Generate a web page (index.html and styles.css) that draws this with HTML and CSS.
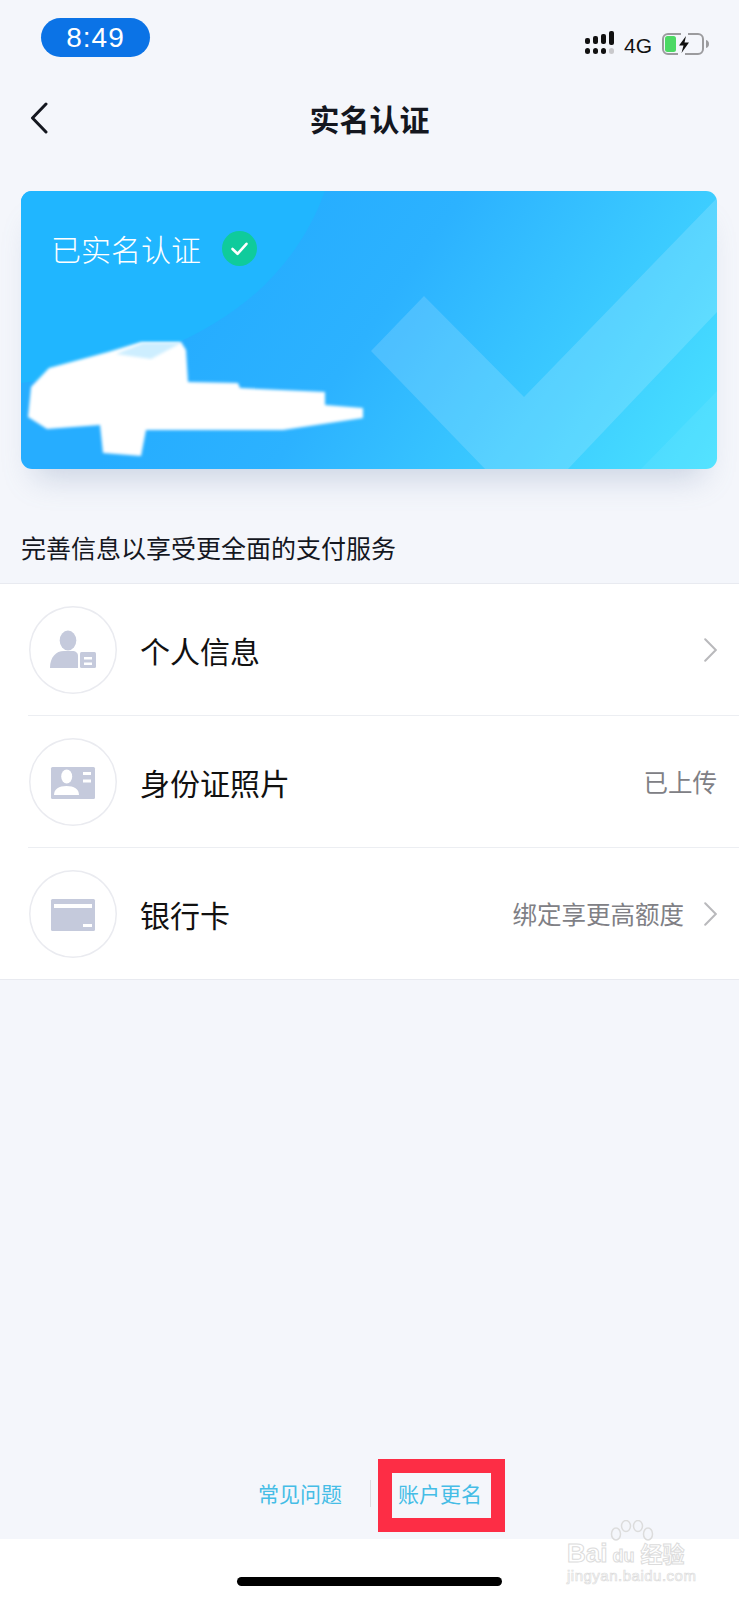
FILE: index.html
```html
<!DOCTYPE html>
<html lang="zh-CN">
<head>
    <meta charset="UTF-8">
    <title>实名认证</title>
    <link rel="stylesheet" href="styles.css">
</head>
<body>
    <div class="screen">
        <!-- status bar -->
        <div class="status-bar">
            <div class="time-pill">8:49</div>
            <div class="status-right">
                <svg class="signal" width="29" height="23" viewBox="0 0 29 23">
                    <rect x="0" y="7" width="5" height="6" rx="2" fill="#111"/>
                    <rect x="8" y="5" width="5" height="8" rx="2" fill="#111"/>
                    <rect x="16" y="3" width="5" height="10" rx="2" fill="#111"/>
                    <rect x="24" y="0" width="5" height="14" rx="2" fill="#111"/>
                    <rect x="0" y="17" width="5" height="6" rx="2.5" fill="#111"/>
                    <rect x="8" y="17" width="5" height="6" rx="2.5" fill="#111"/>
                    <rect x="16" y="17" width="5" height="6" rx="2.5" fill="#111"/>
                    <rect x="24" y="17" width="5" height="6" rx="2.5" fill="#c9c9cc"/>
                </svg>
                <span class="network">4G</span>
                <svg class="battery" width="47" height="22" viewBox="0 0 47 22">
                    <path d="M19 1H6a5 5 0 0 0-5 5v10a5 5 0 0 0 5 5h10M26 1h10a5 5 0 0 1 5 5v10a5 5 0 0 1-5 5H23" fill="none" stroke="#9b9b9e" stroke-width="2"/>
                    <rect x="3" y="3" width="11" height="16" rx="2.5" fill="#4cd964"/>
                    <path d="M24 3l-7 9.500h4.500l-2 7.500 7.500-10.500h-4.500z" fill="#111"/>
                    <path d="M44 7c2 .6 3 2 3 4s-1 3.400-3 4z" fill="#9b9b9e"/>
                </svg>
            </div>
        </div>

        <!-- nav -->
        <div class="nav">
            <svg class="back" width="18" height="32" viewBox="0 0 18 32">
                <path d="M16 2L2.500 16 16 30" fill="none" stroke="#14171f" stroke-width="3" stroke-linecap="round" stroke-linejoin="round"/>
            </svg>
            <h1 class="nav-title">实名认证</h1>
        </div>

        <!-- verified card -->
        <div class="card">
            <svg class="card-bg" width="696" height="278" viewBox="0 0 696 278">
                <path d="M0 0H304C272 88 190 170 0 192Z" fill="#20b6ff"/>
                <path d="M403 105L350 160 464 278H547L696 121V7L503 206Z" fill="#fff" fill-opacity=".15" transform="translate(0 0)"/>
                <path d="M620 278L696 200V278Z" fill="#fff" fill-opacity=".06"/>
            </svg>
            <div class="card-head">
                <span class="card-title">已实名认证</span>
                <svg class="card-check" width="35" height="35" viewBox="0 0 35 35">
                    <circle cx="17.500" cy="17.500" r="17.500" fill="#0fcb9c"/>
                    <path d="M10.500 18l5 4.800 9-10" fill="none" stroke="#fff" stroke-width="2.600" stroke-linecap="round" stroke-linejoin="round"/>
                </svg>
            </div>
            <!-- painted-out name in the source shot -->
            <svg class="card-blot" width="696" height="278" viewBox="0 0 696 278">
                <defs>
                    <filter id="soft"><feGaussianBlur stdDeviation="1.800"/></filter>
                </defs>
                <path d="M160 151L120 151 87 161 28 177 10 196 7 226 26 238 79 234 82 262 120 265 125 239 262 239 342 227 342 217 304 214 304 201 219 197 217 192 167 191 165 159Z" fill="#fff" filter="url(#soft)"/>
                <path d="M160 152L122 152 95 163 130 168Z" fill="#cdeeff" filter="url(#soft)"/>
            </svg>
        </div>

        <p class="hint">完善信息以享受更全面的支付服务</p>

        <div class="list">
            <div class="row">
                <div class="row-icon">
                    <svg width="88" height="88" viewBox="0 0 88 88">
                        <ellipse cx="39" cy="34.500" rx="8.300" ry="10" fill="#c5cadc"/>
                        <path d="M21 62c0-11 6-17 14-17h8c4 0 6 2 6 5v12z" fill="#c5cadc"/>
                        <rect x="51" y="46" width="16" height="16" rx="1.500" fill="#c5cadc"/>
                        <rect x="55" y="51" width="8" height="2.500" fill="#fff"/>
                        <rect x="55" y="56.500" width="8" height="2.500" fill="#fff"/>
                    </svg>
                </div>
                <span class="row-label">个人信息</span>
                <svg class="chevron" width="13" height="24" viewBox="0 0 13 24">
                    <path d="M1.200 1.200L11.800 12 1.200 22.800" fill="none" stroke="#b9b9bc" stroke-width="2" stroke-linecap="round"/>
                </svg>
            </div>
            <div class="row">
                <div class="row-icon">
                    <svg width="88" height="88" viewBox="0 0 88 88">
                        <rect x="22" y="29" width="44" height="32" rx="1.500" fill="#c5cadc"/>
                        <ellipse cx="37.700" cy="38.500" rx="5.500" ry="7" fill="#fff"/>
                        <path d="M25 57c0-6 5-9 12.500-9S50 51 50 57z" fill="#fff"/>
                        <rect x="54" y="34" width="8" height="3" fill="#fff"/>
                        <rect x="54" y="41.500" width="8" height="3" fill="#fff"/>
                    </svg>
                </div>
                <span class="row-label">身份证照片</span>
                <span class="row-value">已上传</span>
            </div>
            <div class="row row-last">
                <div class="row-icon">
                    <svg width="88" height="88" viewBox="0 0 88 88">
                        <rect x="22" y="29" width="44" height="32" rx="1.500" fill="#c5cadc"/>
                        <rect x="25" y="34" width="38" height="4" fill="#fff"/>
                        <rect x="54" y="54" width="9" height="3" fill="#fff"/>
                    </svg>
                </div>
                <span class="row-label">银行卡</span>
                <span class="row-value">绑定享更高额度</span>
                <svg class="chevron" width="13" height="24" viewBox="0 0 13 24">
                    <path d="M1.200 1.200L11.800 12 1.200 22.800" fill="none" stroke="#b9b9bc" stroke-width="2" stroke-linecap="round"/>
                </svg>
            </div>
        </div>

        <div class="links">
            <span class="link link-faq">常见问题</span>
            <span class="link-sep"></span>
            <span class="link">账户更名</span>
        </div>
    </div>

    <div class="bottom-strip">
        <div class="home-bar"></div>
    </div>

    <!-- annotation and watermark sit over the shot -->
    <div class="red-box"></div>
    <div class="watermark">
        <svg class="paw" width="50" height="24" viewBox="0 0 50 24">
            <g fill="none" stroke="#dcdcdc" stroke-width="1.500">
                <ellipse cx="9" cy="14" rx="4.500" ry="6"/>
                <ellipse cx="19" cy="6" rx="4.500" ry="5.500"/>
                <ellipse cx="31" cy="6" rx="4.500" ry="5.500"/>
                <ellipse cx="41" cy="14" rx="4.500" ry="6"/>
            </g>
        </svg>
        <div class="wm-logo"><span>Bai</span><span class="wm-du">du</span><span class="wm-cn">经验</span></div>
        <div class="wm-url">jingyan.baidu.com</div>
    </div>
</body>
</html>
```

FILE: styles.css
```css
html, body {
    margin: 0;
    padding: 0;
    background-color: #fff;
}
body {
    position: relative;
    width: 739px;
    height: 1600px;
    overflow: hidden;
    font-family: "Noto Sans CJK SC", "Noto Sans", sans-serif;
}
.screen {
    height: 1539px;
    background-color: #f4f6fb;
    overflow: hidden;
}

/* status bar */
.status-bar {
    display: flex;
    justify-content: space-between;
    align-items: flex-start;
    padding: 18px 30px 0 41px;
    height: 39px;
}
.time-pill {
    width: 109px;
    height: 39px;
    line-height: 39px;
    border-radius: 20px;
    background-color: #0b73e6;
    color: #fff;
    text-align: center;
    font-family: "Liberation Sans", Arial, sans-serif;
    font-size: 28px;
    letter-spacing: 1px;
}
.status-right {
    display: flex;
    align-items: center;
    margin-top: 13px;
}
.network {
    margin-left: 10px;
    font-family: "Liberation Sans", Arial, sans-serif;
    font-size: 21px;
    line-height: 23px;
    color: #111;
    position: relative;
    top: 3px;
}
.battery {
    margin-left: 10px;
    position: relative;
    top: 1px;
}

/* nav */
.nav {
    position: relative;
    height: 86px;
    margin-top: 18px;
    margin-bottom: 30px;
    display: flex;
    align-items: center;
    justify-content: center;
}
.back {
    position: absolute;
    left: 30px;
    top: 27px;
}
.nav-title {
    margin: 0;
    font-size: 30px;
    font-weight: 700;
    color: #14171f;
}

/* card */
.card {
    position: relative;
    height: 278px;
    margin: 0 22px 0 21px;
    border-radius: 11px;
    background: linear-gradient(125deg, #26adff 30%, #2cb2ff 50%, #4ae2ff 100%);
    box-shadow: 0 22px 30px -14px rgba(110, 135, 175, .32);
    overflow: visible;
}
.card-bg, .card-blot {
    position: absolute;
    left: 0;
    top: 0;
    border-radius: 11px;
}
.card-head {
    position: relative;
    display: flex;
    align-items: center;
    padding: 40px 0 0 30px;
}
.card-title {
    font-size: 30px;
    line-height: 35px;
    font-weight: 300;
    color: #fff;
}
.card-check {
    margin-left: 21px;
}

.hint {
    margin: 61px 0 19px 21px;
    font-size: 25px;
    line-height: 34px;
    color: #14171f;
}

/* list */
.list {
    background-color: #fff;
    border-top: 1px solid #e8eaf0;
    border-bottom: 1px solid #e8eaf0;
}
.row {
    display: flex;
    align-items: center;
    height: 131px;
    margin-left: 28px;
    padding-right: 22px;
    border-bottom: 1px solid #eceef2;
}
.row-last {
    border-bottom: none;
}
.row-icon {
    width: 88px;
    height: 88px;
    margin-left: 1px;
    border-radius: 50%;
    box-shadow: inset 0 0 0 1.500px #eaebf0;
}
.row-label {
    margin-left: 23px;
    flex: 1;
    font-size: 30px;
    line-height: 40px;
    color: #111;
}
.row-value {
    font-size: 24.500px;
    line-height: 34px;
    color: #808085;
}
.chevron {
    margin-left: 20px;
}

/* bottom links */
.links {
    display: flex;
    align-items: center;
    margin-top: 498px;
    padding-left: 258px;
}
.link {
    font-size: 21px;
    line-height: 30px;
    color: #45bde6;
}
.link-sep {
    width: 1px;
    height: 27px;
    margin: 0 27px 0 28px;
    background-color: #dcdee3;
}

.bottom-strip {
    height: 61px;
    background-color: #fff;
}
.home-bar {
    width: 265px;
    height: 9px;
    margin-left: 237px;
    position: relative;
    top: 38px;
    border-radius: 5px;
    background-color: #000;
}

.red-box {
    position: absolute;
    left: 378px;
    top: 1459px;
    width: 127px;
    height: 73px;
    box-sizing: border-box;
    border: 14px solid #fd2d45;
}

.watermark {
    position: absolute;
    left: 567px;
    top: 1520px;
    width: 132px;
    height: 64px;
    color: transparent;
    font-family: "Liberation Sans", Arial, sans-serif;
}
.paw {
    position: absolute;
    left: 40px;
    top: 0;
}
.wm-logo {
    position: absolute;
    left: 0;
    top: 18px;
    display: flex;
    align-items: baseline;
    white-space: nowrap;
    font-size: 26px;
    line-height: 28px;
    font-weight: 700;
    -webkit-text-stroke: 1px #dcdcdc;
}
.wm-du {
    margin-left: 5px;
    font-size: 18px;
}
.wm-cn {
    margin-left: 6px;
    font-family: "Noto Sans CJK SC", sans-serif;
    font-size: 22px;
}
.wm-url {
    position: absolute;
    left: 0;
    top: 48px;
    white-space: nowrap;
    font-size: 15px;
    line-height: 16px;
    letter-spacing: .5px;
    -webkit-text-stroke: .7px #dcdcdc;
}
```
